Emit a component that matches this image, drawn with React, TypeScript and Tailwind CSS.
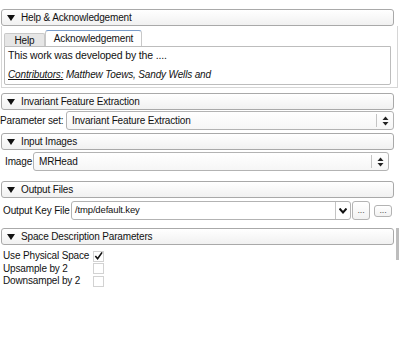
import React from "react";

const font = { fontFamily: '"Liberation Sans", Arial, sans-serif' };

function Triangle() {
	return (
		<svg width="8" height="6" viewBox="0 0 8 6" className="shrink-0">
			<path d="M0 0 L8 0 L4 6 Z" fill="#111" />
		</svg>
	);
}

function SectionHeader({ title }: { title: string }) {
	return (
		<div className="ml-[1px] mr-[6px] h-[17px] flex items-center gap-[6px] pl-[5px] rounded-[3px] border border-[#a9a9a9] bg-gradient-to-b from-white to-[#f1f1f1] text-[10px] tracking-[-0.15px] text-[#111] whitespace-nowrap">
			<Triangle />
			<span>{title}</span>
		</div>
	);
}

function UpDown() {
	return (
		<svg width="7" height="10" viewBox="0 0 7 10">
			<path d="M3.5 0.5 L6.5 4 L0.5 4 Z" fill="#222" />
			<path d="M0.5 6 L6.5 6 L3.5 9.5 Z" fill="#222" />
		</svg>
	);
}

function SelectBox({ value, className }: { value: string; className: string }) {
	return (
		<div
			className={`h-[19px] flex items-center rounded-[3px] border border-[#b3b3b3] bg-gradient-to-b from-white to-[#f6f6f6] text-[#111] ${className}`}
		>
			<span className="flex-1 pl-[5px] whitespace-nowrap">{value}</span>
			<span className="h-[13px] w-px bg-[#c4c4c4]" />
			<span className="w-[16px] flex justify-center">
				<UpDown />
			</span>
		</div>
	);
}

function Check({ checked }: { checked?: boolean }) {
	return (
		<span className="w-[11px] h-[11px] border border-[#d2d2d2] bg-white flex items-center justify-center">
			{checked && (
				<svg width="10" height="10" viewBox="0 0 10 10">
					<path d="M1.5 5 L4 8 L9 1" stroke="#111" strokeWidth="1.8" fill="none" />
				</svg>
			)}
		</span>
	);
}

export default function App() {
	return (
		<div
			className="w-[400px] h-[355px] bg-white pt-[9px] overflow-hidden relative text-[10px] tracking-[-0.15px] text-[#111]"
			style={font}
		>
			{/* Help & Acknowledgement */}
			<SectionHeader title="Help & Acknowledgement" />
			<div className="ml-[1px] mr-[2px] h-[62px] border border-t-0 border-[#d6d6d6] px-[2px] pt-[4px]">
				<div className="flex items-end h-[16px] whitespace-nowrap">
					<div className="w-[41px] h-[13px] flex items-center justify-center bg-[#e6e6e6] border border-b-0 border-[#c8c8c8] rounded-t-[2px]">
						Help
					</div>
					<div className="w-[97px] h-[16px] flex items-center justify-center bg-white border border-b-0 border-[#c8c8c8] border-t-[#7a9cc8] rounded-t-[3px]">
						Acknowledgement
					</div>
				</div>
				<div className="mr-[4px] h-[39px] border border-[#bdbdbd] rounded-b-[2px] px-[3px] leading-[13px] whitespace-nowrap">
					<div className="pt-[2px] text-[10.5px]">This work was developed by the ....</div>
					<div className="pt-[6px] italic">
						<span className="underline">Contributors:</span> Matthew Toews, Sandy Wells and
					</div>
				</div>
			</div>

			{/* Invariant Feature Extraction */}
			<div className="mt-[5px]">
				<SectionHeader title="Invariant Feature Extraction" />
			</div>
			<div className="mt-[1px] flex items-center">
				<span className="w-[66px] whitespace-nowrap">Parameter set:</span>
				<SelectBox value="Invariant Feature Extraction" className="w-[328px]" />
			</div>

			{/* Input Images */}
			<div className="mt-[3px]">
				<SectionHeader title="Input Images" />
			</div>
			<div className="mt-[2px] flex items-center pl-[5px]">
				<span className="w-[28px] whitespace-nowrap">Image</span>
				<SelectBox value="MRHead" className="w-[356px]" />
			</div>

			{/* Output Files */}
			<div className="mt-[10px]">
				<SectionHeader title="Output Files" />
			</div>
			<div className="mt-[3px] flex items-center pl-[3px]">
				<span className="w-[68px] whitespace-nowrap">Output Key File</span>
				<div className="w-[280px] h-[19px] flex items-center rounded-[3px] border border-[#b3b3b3] bg-white">
					<span className="flex-1 pl-[3px] text-[9.5px] whitespace-nowrap">/tmp/default.key</span>
					<span className="h-[17px] w-px bg-[#c4c4c4]" />
					<span className="w-[14px] flex justify-center">
						<svg width="8" height="6" viewBox="0 0 8 6">
							<path d="M0.5 0.5 L4 4.5 L7.5 0.5" stroke="#111" strokeWidth="2" fill="none" />
						</svg>
					</span>
				</div>
				<div className="ml-[1px] w-[18px] h-[19px] rounded-[3px] border border-[#b3b3b3] bg-gradient-to-b from-white to-[#f2f2f2] flex items-center justify-center text-[9px] text-[#555] leading-none">
					...
				</div>
				<div className="ml-[4px] w-[18px] h-[12px] rounded-[3px] border border-[#b3b3b3] bg-gradient-to-b from-white to-[#f2f2f2] flex items-center justify-center text-[9px] text-[#555] leading-none">
					...
				</div>
			</div>

			{/* Space Description Parameters */}
			<div className="mt-[8px]">
				<SectionHeader title="Space Description Parameters" />
			</div>
			<div className="mt-[5px] pl-[3px] leading-[12.5px] whitespace-nowrap">
				<div className="flex items-center">
					<span className="w-[90px]">Use Physical Space</span>
					<Check checked />
				</div>
				<div className="flex items-center">
					<span className="w-[90px]">Upsample by 2</span>
					<Check />
				</div>
				<div className="flex items-center">
					<span className="w-[90px]">Downsampel by 2</span>
					<Check />
				</div>
			</div>

			{/* scrollbar sliver */}
			<div className="absolute left-[396px] top-[228px] w-[3px] h-[32px] bg-[#bdbdbd]" />
		</div>
	);
}
